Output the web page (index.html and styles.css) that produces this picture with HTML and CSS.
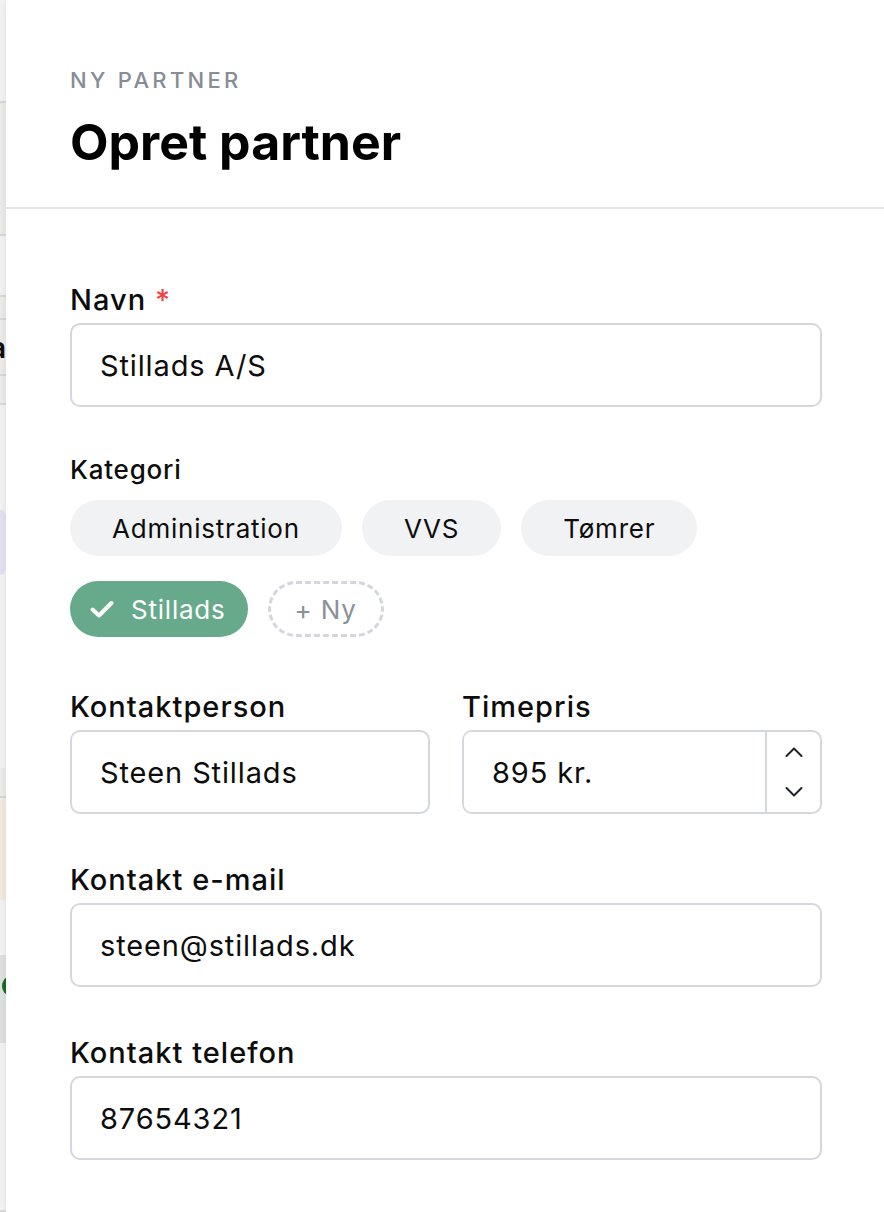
FILE: index.html
```html
<!DOCTYPE html>
<html lang="da">
<head>
    <meta charset="UTF-8">
    <meta name="viewport" content="width=device-width, initial-scale=1.0">
    <title>Opret partner</title>
    <link rel="stylesheet" href="styles.css">
</head>
<body>
    <div class="page">
        <!-- Underlying list, mostly covered by the drawer -->
        <div class="backdrop">
            <div class="bd-row" style="height: 103px"></div>
            <div class="bd-row bd-warm" style="height: 133px"></div>
            <div class="bd-row" style="height: 61px"></div>
            <div class="bd-row bd-warm" style="height: 23px"></div>
            <div class="bd-row bd-warm bd-text" style="height: 56px">a</div>
            <div class="bd-row bd-warm" style="height: 29px"></div>
            <div class="bd-row bd-plain" style="height: 105px"></div>
            <div class="bd-row bd-lilac" style="height: 65px"></div>
            <div class="bd-row bd-plain" style="height: 193px"></div>
            <div class="bd-row bd-warm" style="height: 30px"></div>
            <div class="bd-row bd-peach" style="height: 102px"></div>
            <div class="bd-row bd-plain" style="height: 55px"></div>
            <div class="bd-row bd-mint" style="height: 88px"><span class="bd-dot"></span></div>
            <div class="bd-row bd-plain" style="height: 29px"></div>
            <div class="bd-row" style="height: 140px"></div>
        </div>

        <div class="drawer">
            <div class="drawer-header">
                <div class="eyebrow">NY PARTNER</div>
                <h1>Opret partner</h1>
            </div>

            <form class="drawer-body">
                <div class="field">
                    <label for="navn">Navn <span class="required">*</span></label>
                    <input type="text" id="navn" class="text-input" value="Stillads A/S">
                </div>

                <div class="field field-chips">
                    <label class="label-small">Kategori</label>
                    <div class="chips">
                        <button type="button" class="chip">Administration</button>
                        <button type="button" class="chip">VVS</button>
                        <button type="button" class="chip">Tømrer</button>
                        <button type="button" class="chip chip-active">
                            <svg width="26" height="20" viewBox="0 0 26 20" fill="none">
                                <path d="M3.5 10.5 L10 16.5 L22.5 4" stroke="#fff" stroke-width="4" stroke-linecap="round" stroke-linejoin="round"/>
                            </svg>
                            Stillads
                        </button>
                        <button type="button" class="chip chip-new">+ Ny</button>
                    </div>
                </div>

                <div class="field-row">
                    <div class="field">
                        <label for="kontakt">Kontaktperson</label>
                        <input type="text" id="kontakt" class="text-input" value="Steen Stillads">
                    </div>
                    <div class="field">
                        <label for="timepris">Timepris</label>
                        <div class="number-input">
                            <input type="text" id="timepris" value="895 kr.">
                            <div class="stepper">
                                <button type="button" class="step-btn">
                                    <svg width="20" height="12" viewBox="0 0 20 12" fill="none">
                                        <path d="M2.5 10 L10 2.5 L17.5 10" stroke="#1f2328" stroke-width="2" stroke-linecap="round" stroke-linejoin="round"/>
                                    </svg>
                                </button>
                                <button type="button" class="step-btn">
                                    <svg width="20" height="12" viewBox="0 0 20 12" fill="none">
                                        <path d="M2.5 2 L10 9.5 L17.5 2" stroke="#1f2328" stroke-width="2" stroke-linecap="round" stroke-linejoin="round"/>
                                    </svg>
                                </button>
                            </div>
                        </div>
                    </div>
                </div>

                <div class="field">
                    <label for="email">Kontakt e-mail</label>
                    <input type="text" id="email" class="text-input" value="steen@stillads.dk">
                </div>

                <div class="field">
                    <label for="telefon">Kontakt telefon</label>
                    <input type="text" id="telefon" class="text-input" value="87654321">
                </div>
            </form>
        </div>
    </div>
</body>
</html>
```

FILE: styles.css
```css
/* General page styling */
body {
    margin: 0;
    padding: 0;
    font-family: Inter, "Noto Sans", Arial, sans-serif;
    color: #0d0d0d;
    background-color: #f7f7f7;
    height: 1212px;
    overflow: hidden;
}

.page {
    display: flex;
    height: 1212px;
}

/* Backdrop strip on the left */
.backdrop {
    width: 6px;
    flex-shrink: 0;
    display: flex;
    flex-direction: column;
    background-color: #f7f7f7;
    overflow: hidden;
}

.bd-row {
    flex-shrink: 0;
    border-bottom: 2px solid #dcdcdc;
    box-sizing: border-box;
}

.bd-plain {
    border-bottom: none;
}

.bd-warm {
    background-color: #f1efeb;
}

.bd-peach {
    background-color: #f8efe3;
    border-bottom: none;
}

.bd-lilac {
    background-color: #e8e5f8;
    border-bottom: none;
    border-radius: 0 14px 14px 0;
}

.bd-mint {
    background-color: #e1e6e3;
    border-bottom: none;
    position: relative;
}

.bd-dot {
    position: absolute;
    left: 2px;
    top: 22px;
    width: 14px;
    height: 18px;
    border-radius: 50%;
    background-color: #1e6b22;
}

.bd-text {
    font-size: 28px;
    font-weight: 600;
    line-height: 56px;
    text-indent: -10px;
}

/* Drawer */
.drawer {
    flex: 1;
    min-width: 0;
    background-color: #ffffff;
    box-shadow: -3px 0 10px rgba(0, 0, 0, 0.08);
    position: relative;
}

.drawer-header {
    padding: 67px 62px 36px 64px;
    border-bottom: 2px solid #e4e6e9;
}

.eyebrow {
    font-size: 22px;
    line-height: 26px;
    letter-spacing: 0.15em;
    color: #868d97;
    font-weight: 500;
}

.drawer-header h1 {
    margin: 20px 0 0;
    font-size: 50px;
    line-height: 58px;
    font-weight: 700;
    color: #000000;
}

.drawer-body {
    padding: 74px 62px 0 64px;
    display: flex;
    flex-direction: column;
    gap: 49px;
}

.field {
    display: flex;
    flex-direction: column;
    min-width: 0;
}

.field label {
    font-size: 29px;
    line-height: 34px;
    font-weight: 500;
    letter-spacing: 0.035em;
    margin-bottom: 6px;
}

.field .label-small {
    font-size: 26px;
    line-height: 28px;
    letter-spacing: 0.03em;
    margin-bottom: 16px;
}

.required {
    color: #ef4444;
}

.text-input {
    height: 84px;
    box-sizing: border-box;
    border: 2px solid #d4d7dc;
    border-radius: 10px;
    padding: 0 28px;
    font-family: inherit;
    font-size: 29px;
    letter-spacing: 0.03em;
    color: #0d0d0d;
    background-color: #ffffff;
    width: 100%;
    min-width: 0;
}

.text-input:focus {
    outline: none;
}

/* Category chips */
.field-chips {
    margin-bottom: 4px;
}

.chips {
    display: flex;
    flex-wrap: wrap;
    column-gap: 20px;
    row-gap: 25px;
}

.chip {
    height: 56px;
    padding: 0 42px;
    border: none;
    border-radius: 28px;
    background-color: #f1f2f4;
    font-family: inherit;
    font-size: 26px;
    letter-spacing: 0.03em;
    color: #0d0d0d;
    display: flex;
    align-items: center;
    gap: 16px;
    cursor: pointer;
}

.chip-active {
    background-color: #67aa8b;
    color: #ffffff;
    padding: 0 22px 0 19px;
}

.chip-new {
    background-color: #ffffff;
    border: 3px dashed #d3d7dd;
    color: #8a919b;
    padding: 0 24px;
}

/* Two column row */
.field-row {
    display: grid;
    grid-template-columns: minmax(0, 1fr) minmax(0, 1fr);
    column-gap: 32px;
}

.number-input {
    display: flex;
    height: 84px;
    box-sizing: border-box;
    border: 2px solid #d4d7dc;
    border-radius: 10px;
    overflow: hidden;
}

.number-input input {
    flex: 1;
    min-width: 0;
    border: none;
    padding: 0 28px;
    font-family: inherit;
    font-size: 29px;
    letter-spacing: 0.03em;
    color: #0d0d0d;
}

.number-input input:focus {
    outline: none;
}

.stepper {
    width: 53px;
    border-left: 2px solid #d4d7dc;
    display: flex;
    flex-direction: column;
}

.step-btn {
    flex: 1;
    border: none;
    background: none;
    padding: 0;
    display: flex;
    align-items: center;
    justify-content: center;
    cursor: pointer;
}
```
